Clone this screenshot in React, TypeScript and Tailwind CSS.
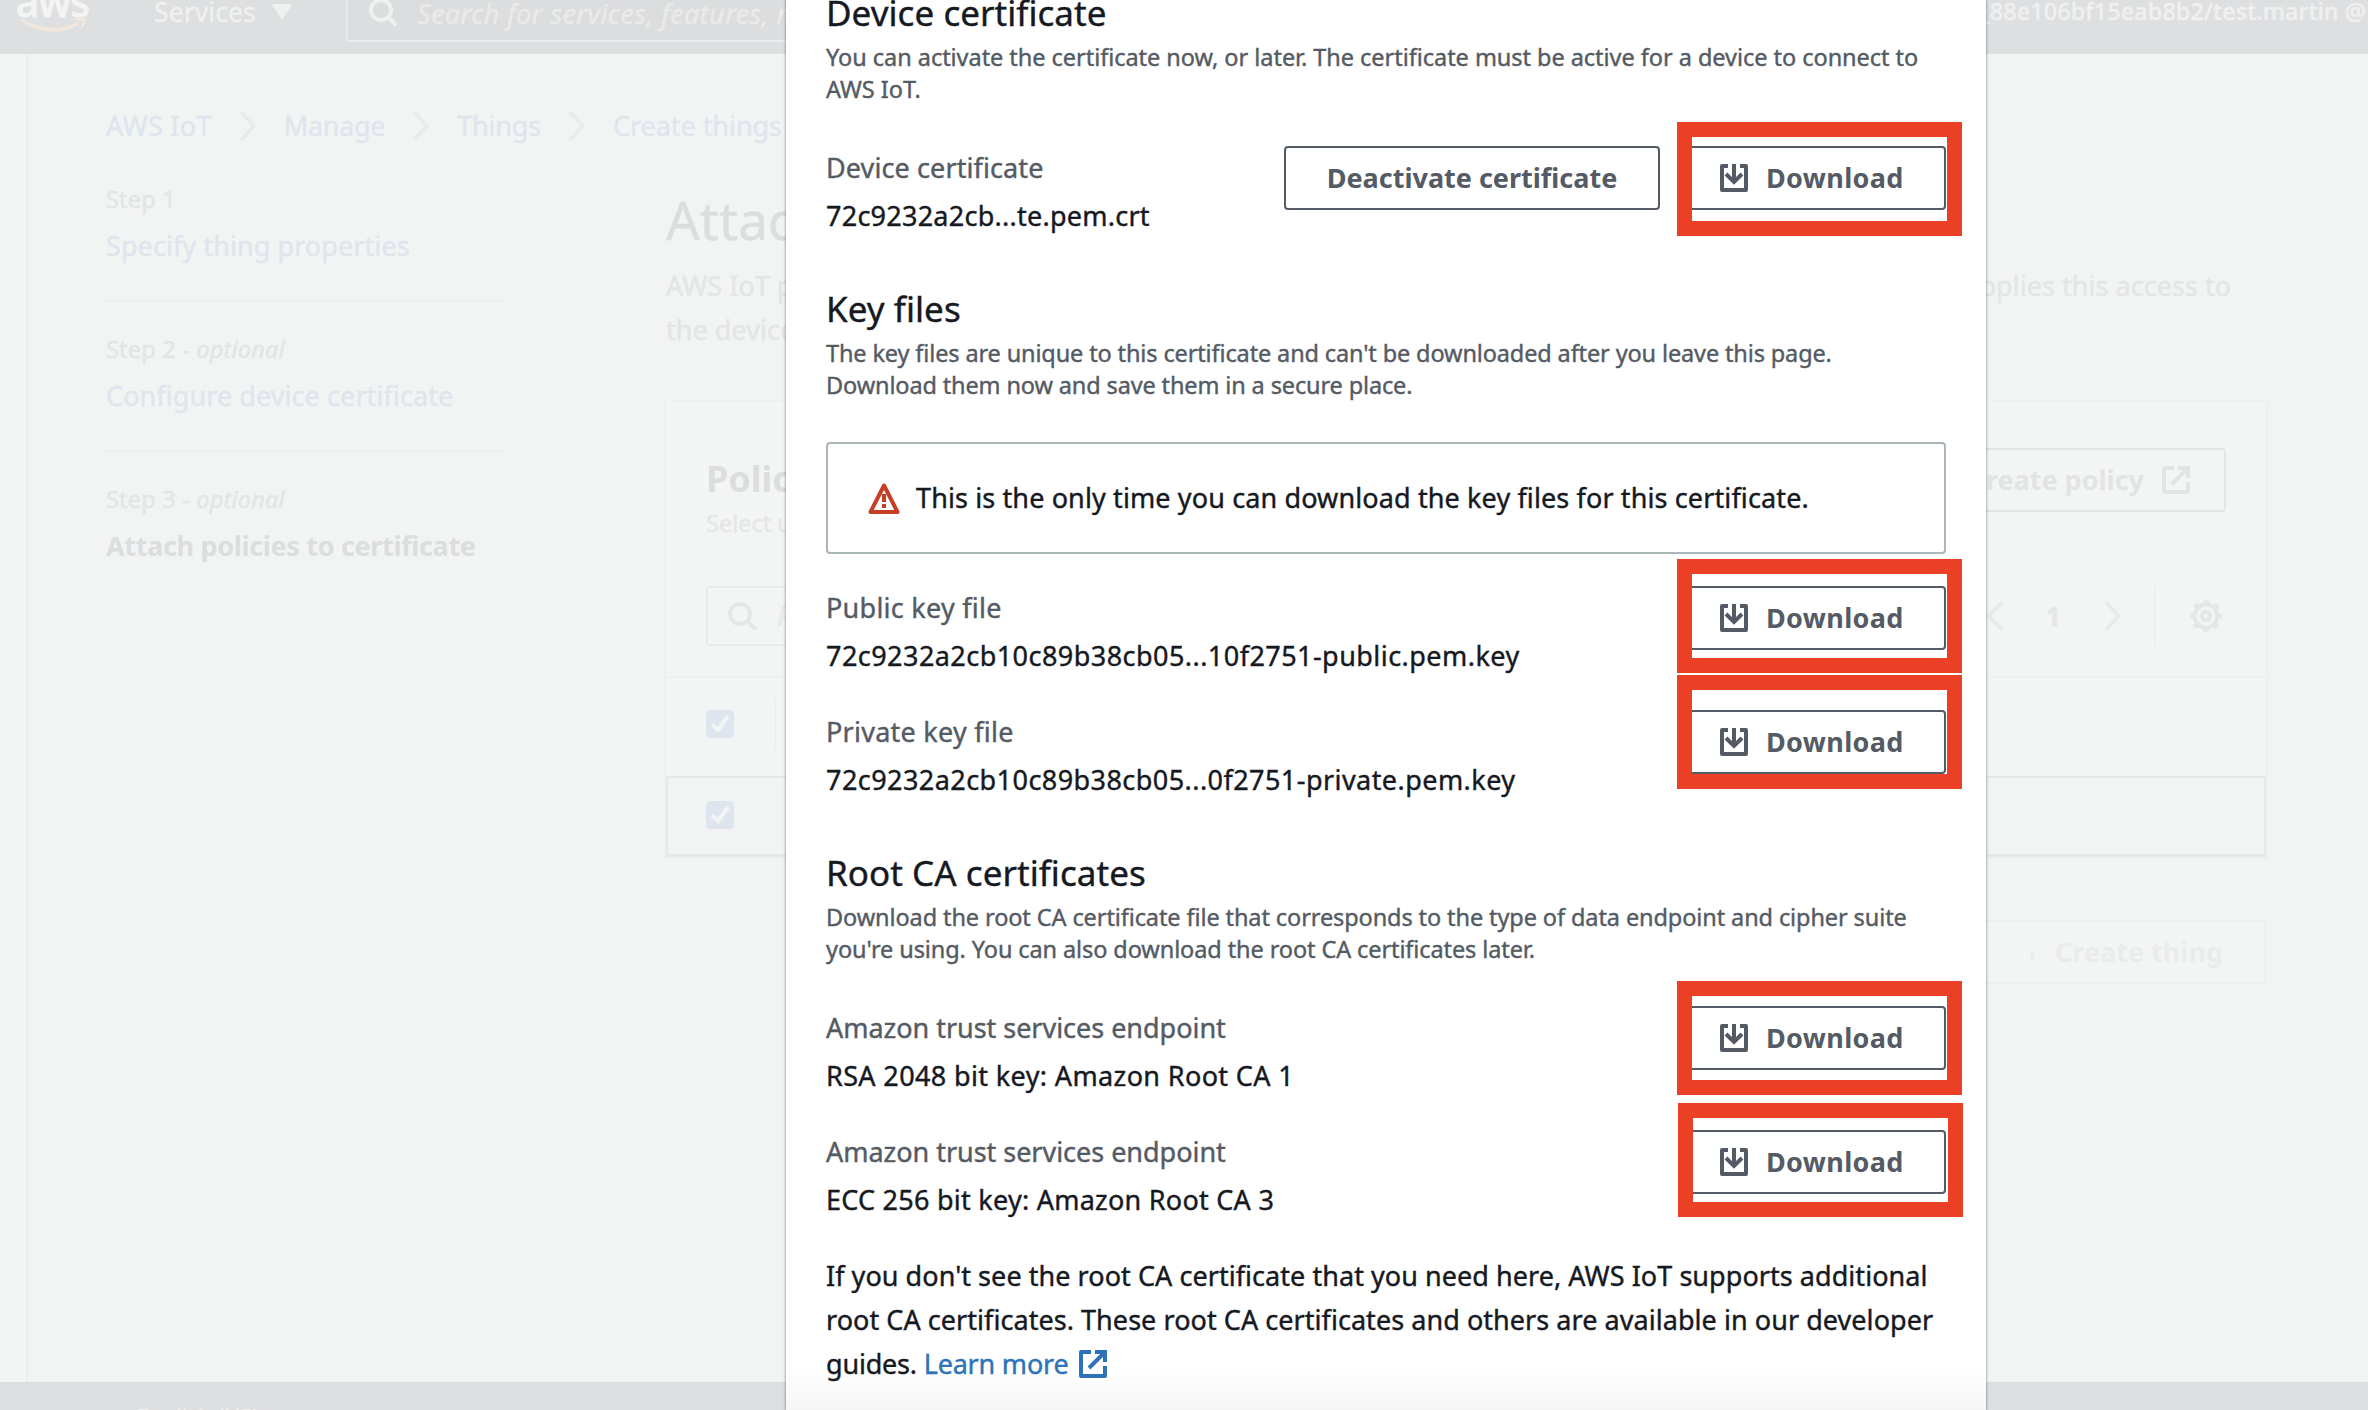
import type { ReactNode } from "react";

const DownloadIcon = () => (
  <svg className="size-7 shrink-0" viewBox="0 0 28 28" fill="none" stroke="currentColor" strokeWidth="4">
    <path d="M8 2H2V26H26V2H20" strokeLinejoin="round" />
    <path d="M14 0V17M6 10L14 18L22 10" />
  </svg>
);

const ExternalIcon = ({ className = "" }: { className?: string }) => (
  <svg className={`size-7 shrink-0 ${className}`} viewBox="0 0 28 28" fill="none" stroke="currentColor" strokeWidth="4">
    <path d="M12 2H2V26H26V16" strokeLinejoin="round" />
    <path d="M16 2H26V12M25 3L10 18" />
  </svg>
);

const SearchIcon = ({ className = "" }: { className?: string }) => (
  <svg className={`size-[29px] shrink-0 ${className}`} viewBox="0 0 29 29" fill="none" stroke="currentColor" strokeWidth="4">
    <circle cx="12" cy="12" r="10" />
    <path d="M19 19L27.5 27.5" />
  </svg>
);

const Chevron = ({ left = false }: { left?: boolean }) => (
  <svg className="h-[30px] w-[18px] shrink-0 text-[#e9ebeb]" viewBox="0 0 18 30" fill="none" stroke="currentColor" strokeWidth="3.5">
    <path d={left ? "M16 1L3 15L16 29" : "M2 1L15 15L2 29"} />
  </svg>
);

const GearIcon = () => (
  <svg className="size-8 shrink-0" viewBox="0 0 32 32" fill="none" stroke="currentColor">
    <circle cx="16" cy="16" r="11.5" strokeWidth="4" />
    <circle cx="16" cy="16" r="14" strokeWidth="4" strokeDasharray="5.5 5.5" strokeDashoffset="2.75" />
    <circle cx="16" cy="16" r="4" strokeWidth="4" />
  </svg>
);

const WarningIcon = () => (
  <svg className="size-8 shrink-0 text-[#c63f24]" viewBox="0 0 32 32" fill="none" stroke="currentColor" strokeWidth="4">
    <path d="M16 3.5L29.5 30H2.5Z" strokeLinejoin="round" />
    <path d="M16 12V20M16 22V26" />
  </svg>
);

const Checkbox = () => (
  <span className="flex size-7 shrink-0 items-center justify-center rounded-[4px] bg-[#dfe5ee]">
    <svg className="size-7" viewBox="0 0 28 28" fill="none" stroke="#f3f5f5" strokeWidth="4">
      <path d="M6 14.5L12 20L22 6" />
    </svg>
  </span>
);

function TopBar() {
  return (
    <header className="flex h-[54px] w-full shrink-0 items-start overflow-hidden bg-[#dedfe1] text-[#eff0f0]">
      <div className="ml-[19px] flex w-[67px] flex-col items-center">
        <span className="-mt-[19px] text-[41px] leading-[40px] font-medium tracking-[-1px] text-[#f3f4f4] [-webkit-text-stroke:0.8px]">aws</span>
        <svg className="-mt-1 h-4 w-[66px]" viewBox="0 0 66 16">
          <path d="M1 1C20 13 43 13 57 5L59 7C44 19 16 17 0 3Z" fill="#f1e7dc" />
          <path d="M52 3C56 0 65 0 66 1C67 4 63 11 60 13C61 9 63 5 61 4C59 3 55 3 52 3Z" fill="#f1e7dc" />
        </svg>
      </div>
      <span className="-mt-1 ml-[68px] text-[26.5px] leading-8 tracking-[0.1px]">Services</span>
      <svg className="mt-1 ml-[15px] h-4 w-[22px]" viewBox="0 0 22 16">
        <path d="M2 1H20L11 14Z" fill="currentColor" stroke="currentColor" strokeWidth="2" strokeLinejoin="round" />
      </svg>
      <div className="-mt-4 ml-[53px] flex h-[58px] w-[900px] items-start rounded-[4px] border-2 border-[#e9eaeb] bg-[#dcddde]">
        <SearchIcon className="mt-3 ml-[21px] text-[#eff0f0]" />
        <span className="mt-[12px] ml-[19px] text-[27px] leading-8 tracking-[0.4px] whitespace-nowrap text-[#e9eaea] italic">
          Search for services, features, marketplace products, and docs
        </span>
      </div>
      <span className="-mt-[5px] mr-0.5 ml-auto text-[23.5px] leading-8 font-medium tracking-[0.05px] whitespace-nowrap">
        _88e106bf15eab8b2/test.martin @
      </span>
    </header>
  );
}

const crumbs = [
  { label: "AWS IoT", tracking: "tracking-[0.3px]" },
  { label: "Manage", tracking: "tracking-[-0.3px]" },
  { label: "Things", tracking: "tracking-[-0.2px]" },
  { label: "Create things", tracking: "tracking-[-0.05px]" },
];

function Breadcrumbs() {
  return (
    <nav className="mt-[52px] flex h-10 items-center gap-[27px] text-[27px] leading-10 text-[#dfe5ee]">
      {crumbs.map((c, i) => (
        <span key={c.label} className="flex items-center gap-[27px] whitespace-nowrap">
          {i > 0 && <Chevron />}
          <span className={c.tracking}>{c.label}</span>
        </span>
      ))}
    </nav>
  );
}

const steps = [
  { n: "Step 1", optional: false, title: "Specify thing properties" },
  { n: "Step 2", optional: true, title: "Configure device certificate" },
  { n: "Step 3", optional: true, title: "Attach policies to certificate" },
];

function Steps() {
  return (
    <ol className="w-[400px] shrink-0">
      {steps.map((s, i) => (
        <li key={s.n} className={i < 2 ? "mb-[31px] border-b-2 border-[#ecefee] pb-8" : ""}>
          <div className="text-[23.5px] leading-8 tracking-[0.2px] text-[#e3e5e5]">
            {s.n}
            {s.optional && (
              <>
                {" - "}
                <i>optional</i>
              </>
            )}
          </div>
          <div
            className={
              i < 2
                ? "mt-[9px] text-[27px] leading-[44px] tracking-[0.08px] whitespace-nowrap text-[#dfe5ee]"
                : "mt-[9px] text-[27px] leading-[44px] font-bold tracking-[-0.33px] whitespace-nowrap text-[#dbdddf] [-webkit-text-stroke:0px]"
            }
          >
            {s.title}
          </div>
        </li>
      ))}
    </ol>
  );
}

function PolicyCard() {
  return (
    <section className="mt-[49px] flex h-[456px] w-[1600px] flex-col bg-[#f3f5f4] shadow-[0_0_2px_1px_#ebeeee]">
      <div className="flex items-start justify-between px-10 pt-[47px]">
        <div>
          <h2 className="mt-[9px] text-[36px] leading-[44px] font-bold text-[#dbdddf] [-webkit-text-stroke:0px]">Policies</h2>
          <p className="mt-[6px] text-[23.5px] leading-8 text-[#e5e7e7]">Select up to 10 policies to attach to this certificate.</p>
        </div>
        <div className="flex h-16 items-center rounded-[4px] border-2 border-[#e3e5e6] px-[34px] text-[27px] font-bold text-[#e1e3e4] [-webkit-text-stroke:0px]">
          Create policy
          <ExternalIcon className="ml-[18px]" />
        </div>
      </div>
      <div className="mt-[47px] flex h-[60px] items-center justify-between px-10">
        <div className="flex h-[60px] w-[800px] items-center rounded-[4px] border-2 border-[#e8eaeb] pl-5 text-[27px] text-[#e8eaea] italic">
          <SearchIcon className="text-[#e4e6e7]" />
          <span className="ml-5">Filter policies</span>
        </div>
        <div className="flex h-[60px] items-center text-[#e4e6e7]">
          <Chevron left />
          <span className="ml-[42px] text-[27px] font-bold">1</span>
          <span className="ml-[43px] flex">
            <Chevron />
          </span>
          <span className="ml-8 h-[60px] w-0.5 bg-[#eef0f0]" />
          <span className="mr-1 ml-[34px] flex">
            <GearIcon />
          </span>
        </div>
      </div>
      <div className="mt-[30px] flex h-[100px] items-center border-t-2 border-[#eff1f1] pl-10">
        <span className="-mt-[7px] flex items-center">
          <Checkbox />
          <span className="ml-[41px] h-12 w-px bg-[#ebeded]" />
        </span>
      </div>
      <div className="flex h-[81px] items-center border-2 border-b-[3px] border-[#e2eaed] bg-[#f2f4f4] pb-0.5 pl-[38px]">
        <Checkbox />
      </div>
    </section>
  );
}

function Page() {
  return (
    <div className="flex h-full w-full flex-col bg-[#f1f4f3]">
      <TopBar />
      <div className="flex h-[1328px] shrink-0">
        <div className="w-[28px] shrink-0 border-r-2 border-[#ebedec] bg-[#f3f5f4]" />
        <div className="flex flex-col pl-[78px]">
          <Breadcrumbs />
          <div className="mt-[37px] flex items-start">
            <Steps />
            <main className="ml-[160px] w-[1600px] pt-[5px]">
              <h1 className="text-[53px] leading-[64px] whitespace-nowrap text-[#dbdddf]">Attach policies to certificate</h1>
              <p className="mt-3 text-[27px] leading-[44px] tracking-[0.03px] whitespace-nowrap text-[#e3e5e6]">
                AWS IoT policies grant or deny access to AWS IoT resources. Attaching policies to the device certificate applies this access to
                <br />
                the device.
              </p>
              <PolicyCard />
              <div className="mt-[63px] flex justify-end">
                <div className="flex h-16 items-center rounded-[4px] border-2 border-[#eef0f0] bg-[#f3f5f4] pr-[41px] pl-[100px] text-[27px] font-bold text-[#eaecec] [-webkit-text-stroke:0px]">
                  <svg className="mt-[8px] mr-5 h-2 w-[5px]" viewBox="0 0 5 8">
                    <path d="M1.5 0H5L3 8H0Z" fill="currentColor" />
                  </svg>
                  Create thing
                </div>
              </div>
            </main>
          </div>
        </div>
      </div>
      <footer className="h-7 shrink-0 overflow-hidden bg-[#dddee0] pl-[137px] text-[22px] leading-8 whitespace-nowrap text-[#eff0f0]">
        <div className="mt-[18px]">English (US)</div>
      </footer>
    </div>
  );
}

function Heading({ title, children, className = "", textClass = "tracking-[-0.1px]" }: {
  title: string;
  children: ReactNode;
  className?: string;
  textClass?: string;
}) {
  return (
    <div className={className}>
      <h2 className="text-[35px] leading-10 tracking-[0.05px] text-[#16191f]">{title}</h2>
      <p className={`mt-2 text-[23.5px] leading-8 whitespace-nowrap text-[#545b64] ${textClass}`}>{children}</p>
    </div>
  );
}

function FileRow({ label, value, frame, labelClass = "", valueClass = "", className = "", children }: {
  label: string;
  value: string;
  frame: string;
  labelClass?: string;
  valueClass?: string;
  className?: string;
  children?: ReactNode;
}) {
  return (
    <div className={`flex items-start ${className}`}>
      <div className="mr-auto text-[27px] leading-[48px] whitespace-nowrap">
        <div className={`text-[#545b64] ${labelClass}`}>{label}</div>
        <div className={`text-[#16191f] ${valueClass}`}>{value}</div>
      </div>
      <div className="mt-0.5 flex gap-5 text-[27px] font-bold text-[#545b64] [-webkit-text-stroke:0px]">
        {children}
        <div className="relative">
          <button className="flex h-16 w-[266px] items-center gap-[18px] rounded-[4px] border-2 border-[#545b64] pl-[38px] tracking-[0.35px]">
            <DownloadIcon />
            Download
          </button>
          <span className={`absolute h-[114px] w-[285px] border-[15px] border-[#ec4026] ${frame}`} />
        </div>
      </div>
    </div>
  );
}

function CertificateDialog() {
  return (
    <div className="absolute top-0 left-[786px] h-[1410px] w-[1200px] overflow-hidden bg-white px-10 shadow-[0_0_2px_1px_rgba(0,28,36,0.3)]">
      <Heading title="Device certificate" className="-mt-[7px]" textClass="tracking-[-0.04px]">
        You can activate the certificate now, or later. The certificate must be active for a device to connect to
        <br />
        AWS IoT.
      </Heading>
      <FileRow className="mt-[39px]" label="Device certificate" value="72c9232a2cb...te.pem.crt" labelClass="tracking-[0.1px]" valueClass="tracking-[0.25px]" frame="-top-[24px] -right-[16px]">
        <button className="h-16 w-[376px] rounded-[4px] border-2 border-[#545b64]">Deactivate certificate</button>
      </FileRow>

      <Heading title="Key files" className="mt-[49px]" textClass="tracking-[-0.13px]">
        The key files are unique to this certificate and can't be downloaded after you leave this page.
        <br />
        Download them now and save them in a secure place.
      </Heading>
      <div className="mt-[41px] flex h-28 items-center rounded-[4px] border-2 border-[#aab7b8] pl-10 text-[27px] tracking-[0.12px] text-[#16191f]">
        <WarningIcon />
        <span className="ml-4">This is the only time you can download the key files for this certificate.</span>
      </div>
      <FileRow className="mt-[30px]" label="Public key file" value="72c9232a2cb10c89b38cb05...10f2751-public.pem.key" labelClass="tracking-[0.25px]" valueClass="tracking-[0.45px]" frame="-top-[27px] -right-[16px]" />
      <FileRow className="mt-7" label="Private key file" value="72c9232a2cb10c89b38cb05...0f2751-private.pem.key" labelClass="tracking-[0.25px]" valueClass="tracking-[0.44px]" frame="-top-[35px] -right-[16px]" />

      <Heading title="Root CA certificates" className="mt-[49px]">
        Download the root CA certificate file that corresponds to the type of data endpoint and cipher suite
        <br />
        you're using. You can also download the root CA certificates later.
      </Heading>
      <FileRow className="mt-[39px]" label="Amazon trust services endpoint" value="RSA 2048 bit key: Amazon Root CA 1" labelClass="tracking-[-0.03px]" valueClass="tracking-[0.37px]" frame="-top-[25px] -right-[16px]" />
      <FileRow className="mt-7" label="Amazon trust services endpoint" value="ECC 256 bit key: Amazon Root CA 3" labelClass="tracking-[-0.03px]" valueClass="tracking-[0.25px]" frame="-top-[27px] -right-[17px]" />

      <p className="mt-[30px] text-[27px] leading-[44px] tracking-[0.05px] whitespace-nowrap text-[#16191f]">
        If you don't see the root CA certificate that you need here, AWS IoT supports additional
        <br />
        root CA certificates. These root CA certificates and others are available in our developer
        <br />
        <span className="tracking-[-0.2px]">guides. </span>
        <a className="tracking-[-0.2px] text-[#2e73b8]">
          Learn more
          <ExternalIcon className="ml-[10px] inline-block align-[-4px]" />
        </a>
      </p>
      <div className="absolute bottom-0 left-0 h-10 w-full bg-linear-to-b from-transparent to-black/4" />
    </div>
  );
}

export default function App() {
  return (
    <div className="relative h-[1410px] w-[2368px] overflow-hidden font-['Noto_Sans',sans-serif] [-webkit-text-stroke:0.4px]">
      <Page />
      <CertificateDialog />
    </div>
  );
}
